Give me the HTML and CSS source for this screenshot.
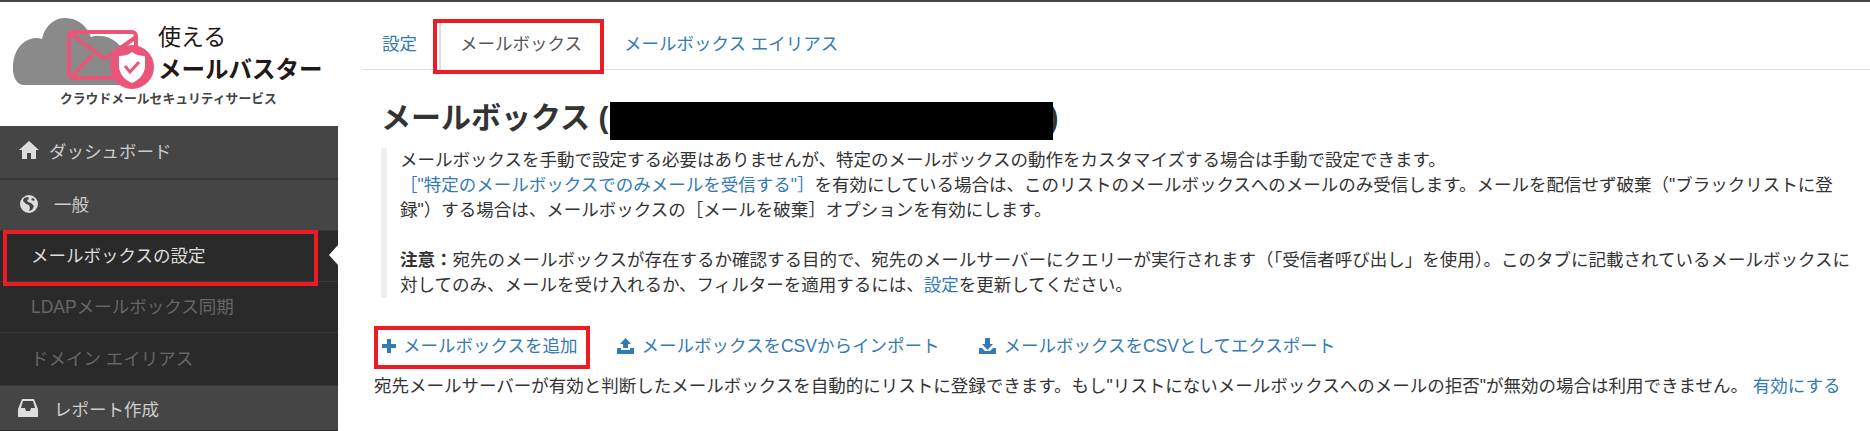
FILE: index.html
```html
<!DOCTYPE html>
<html lang="ja">
  <head>
    <meta charset="UTF-8" />
    <title>メールボックス</title>
    <link rel="stylesheet" href="styles.css">
  </head>
  <body>
    <div class="page">
      <aside class="sidebar">
        <div class="logo">
          <div class="logo-top">
            <svg class="logo-mark" viewBox="0 0 145 72" width="145" height="72">
              <path d="M10 68 C-4 66 -3 36 10 26 C16 21 24 20 29 22 C32 8 42 1 52 1 C66 1 74 10 78 20 C86 17 100 20 106 28 C118 30 124 40 124 50 L120 68 Z" fill="#8a8a8a" />
              <rect x="56" y="15" width="67" height="46" rx="4" fill="none" stroke="#e9567a" stroke-width="4" />
              <path d="M57 16 L89 40 Q92 42 95 40 L123 20 M58 61 L79 38" fill="none" stroke="#e9567a" stroke-width="4" />
              <circle cx="119" cy="50" r="22" fill="#e9567a" />
              <path d="M119 35 C123 38 128 39 132 39 L132 49 C132 57 126 63 119 66 C112 63 106 57 106 49 L106 39 C110 39 115 38 119 35 Z" fill="#fff" />
              <path d="M112 49 L117 55 L126 45" fill="none" stroke="#e9567a" stroke-width="3" />
            </svg>
            <div class="logo-name">
              <span class="logo-small">使える</span>
              <span class="logo-big">メールバスター</span>
            </div>
          </div>
          <div class="logo-sub">クラウドメールセキュリティサービス</div>
        </div>
        <nav>
          <a class="nav-item nav-first">
            <svg class="nav-icon" viewBox="0 0 20 18"><path d="M10 0 L20 9 L17 9 L17 18 L12 18 L12 12 L8 12 L8 18 L3 18 L3 9 L0 9 Z" /></svg>
            ダッシュボード
          </a>
          <a class="nav-item nav-general">
            <svg class="nav-icon" viewBox="0 0 18 18"><path fill-rule="evenodd" d="M9 0 A9 9 0 1 1 9 18 A9 9 0 1 1 9 0 Z M8 2 L4 3 L3 6 L6 9 L9 10 L10 13 L9 16 L12 15 L14 11 L11 8 L8 7 L7 5 L9 4 Z M13 3 L11 4 L13 6 L15 5 Z" /></svg>
            一般
          </a>
          <a class="sub-item active callout">メールボックスの設定</a>
          <a class="sub-item off">LDAPメールボックス同期</a>
          <a class="sub-item off sub-last">ドメイン エイリアス</a>
          <a class="nav-item nav-report">
            <svg class="nav-icon" viewBox="0 0 20 18"><path fill-rule="evenodd" d="M4 0 L16 0 L20 10 L20 18 L0 18 L0 10 Z M5 2 L3 9 L7 9 L8 12 L12 12 L13 9 L17 9 L15 2 Z" /></svg>
            レポート作成
          </a>
        </nav>
      </aside>

      <main class="content">
        <ul class="tabs">
          <li class="tab-first"><a href="#">設定</a></li>
          <li class="tab-on callout"><a href="#">メールボックス</a></li>
          <li><a href="#">メールボックス エイリアス</a></li>
        </ul>

        <h1 class="title">メールボックス (<span class="redacted"></span>)</h1>

        <blockquote class="note">
          メールボックスを手動で設定する必要はありませんが、特定のメールボックスの動作をカスタマイズする場合は手動で設定できます。<br>
          <a href="#">［"特定のメールボックスでのみメールを受信する"］</a>を有効にしている場合は、このリストのメールボックスへのメールのみ受信します。メールを配信せず破棄（"ブラックリストに登録"）する場合は、メールボックスの［メールを破棄］オプションを有効にします。<br>
          <br>
          <strong>注意：</strong>宛先のメールボックスが存在するか確認する目的で、宛先のメールサーバーにクエリーが実行されます（「受信者呼び出し」を使用）。このタブに記載されているメールボックスに対してのみ、メールを受け入れるか、フィルターを適用するには、<a href="#">設定</a>を更新してください。
        </blockquote>

        <div class="actions">
          <a href="#" class="action action-add callout">
            <svg class="action-icon icon-plus" viewBox="0 0 14 14"><path d="M5 0 H9 V5 H14 V9 H9 V14 H5 V9 H0 V5 H5 Z" /></svg>
            メールボックスを追加
          </a>
          <a href="#" class="action">
            <svg class="action-icon" viewBox="0 0 17 16"><path d="M8.5 0 L14 6 L11 6 L11 10 L6 10 L6 6 L3 6 Z M0 10 L4 10 L4 12 L13 12 L13 10 L17 10 L17 16 L0 16 Z" /></svg>
            メールボックスをCSVからインポート
          </a>
          <a href="#" class="action">
            <svg class="action-icon" viewBox="0 0 17 16"><path d="M6 0 L11 0 L11 6 L14 6 L8.5 12 L3 6 L6 6 Z M0 10 L3 10 L6 13 L11 13 L14 10 L17 10 L17 16 L0 16 Z" /></svg>
            メールボックスをCSVとしてエクスポート
          </a>
        </div>

        <p class="auto-list">宛先メールサーバーが有効と判断したメールボックスを自動的にリストに登録できます。もし"リストにないメールボックスへのメールの拒否"が無効の場合は利用できません。 <a href="#">有効にする</a></p>
      </main>
    </div>
  </body>
</html>
```

FILE: styles.css
```css
html,
body {
  margin: 0;
  padding: 0;
  height: 431px;
  overflow: hidden;
  background: #fff;
  color: #333;
  font-family: "Liberation Sans", "Noto Sans CJK JP", sans-serif;
  font-size: 17.5px;
}

a {
  color: #337ab7;
  text-decoration: none;
}

.page {
  display: flex;
  height: 429px;
  border-top: 2px solid #444;
}

/* sidebar */
.sidebar {
  width: 338px;
  flex-shrink: 0;
  background: #2a2a2a;
}

.logo {
  height: 124px;
  box-sizing: border-box;
  padding: 15px 0 0 13px;
  background: #fff;
}

.logo-top {
  display: flex;
  align-items: flex-start;
}

.logo-mark {
  flex-shrink: 0;
}

.logo-name {
  display: flex;
  flex-direction: column;
  color: #231815;
  white-space: nowrap;
}

.logo-small {
  font-size: 23px;
  line-height: 32px;
  margin-top: 4px;
}

.logo-big {
  font-size: 23.5px;
  font-weight: 700;
  line-height: 34px;
}

.logo-sub {
  margin: 2px 0 0 47px;
  color: #444;
  font-size: 12.8px;
  font-weight: 700;
  line-height: 16px;
  white-space: nowrap;
}

.nav-item,
.sub-item {
  display: flex;
  align-items: center;
  box-sizing: border-box;
  font-size: 17.5px;
  white-space: nowrap;
}

.nav-item {
  background: #454545;
  color: #ccc;
  border-bottom: 2px solid #383838;
}

.nav-first {
  height: 54px;
  padding: 0 0 4px 19px;
  gap: 10px;
}

.nav-general {
  height: 51px;
  padding: 0 0 3px 19px;
  gap: 15px;
  border-bottom-width: 1px;
}

.nav-report {
  height: 45px;
  padding-left: 18px;
  gap: 16px;
  border-bottom: 0;
  border-top: 1px solid #383838;
}

.nav-icon {
  width: 20px;
  height: 18px;
  fill: #ddd;
  flex-shrink: 0;
}

.sub-item {
  height: 51px;
  padding: 0 0 4px 31px;
  border-bottom: 1px solid #3a3a3a;
  color: #666;
}

.sub-last {
  height: 52px;
  border-bottom: 0;
}

.sub-item.active {
  color: #ddd;
}

/* little white arrow pointing at the content */
.sub-item.active::before {
  content: "";
  position: absolute;
  right: 0;
  top: 14px;
  border-style: solid;
  border-width: 10px 9px 10px 0;
  border-color: transparent #fff transparent transparent;
}

/* red marks added on the screenshot */
.callout {
  position: relative;
}

.callout::after {
  content: "";
  position: absolute;
  border: 4px solid #ed1c24;
  box-sizing: border-box;
  pointer-events: none;
}

.sub-item.callout::after {
  left: 3px;
  top: -1px;
  width: 315px;
  height: 56px;
}

.tab-on.callout::after {
  left: -8px;
  top: -1px;
  width: 171px;
  height: 55px;
}

.action-add.callout::after {
  left: -8px;
  top: -8px;
  width: 216px;
  height: 43px;
}

/* content */
.content {
  flex: 1;
  min-width: 0;
  padding: 18px 19px 0 24px;
}

.tabs {
  display: flex;
  height: 49px;
  margin: 0 -19px 0 0;
  padding: 0;
  list-style: none;
  border-bottom: 1px solid #ddd;
}

.tabs li {
  height: 50px;
}

.tabs a {
  display: block;
  padding: 0 21px;
  line-height: 48px;
  white-space: nowrap;
}

.tabs .tab-first a {
  padding: 0 22px 0 20px;
}

.tab-on {
  box-sizing: border-box;
  background: #fff;
  border-left: 2px solid #ddd;
}

.tabs .tab-on a {
  color: #555;
  padding: 0 21px 0 19px;
}

.title {
  display: flex;
  align-items: flex-start;
  height: 38px;
  margin: 32px 0 0 19px;
  font-size: 30px;
  font-weight: 700;
  line-height: 32px;
  white-space: pre;
}

.redacted {
  position: relative;
  display: block;
  width: 443px;
  height: 38px;
  margin: 0 -5px 0 2px;
  background: #000;
}

.note {
  margin: 8px 0 0 19px;
  padding: 0 0 0 13px;
  border-left: 6px solid #eee;
  line-height: 25px;
}

.actions {
  display: flex;
  margin: 36px 0 0 20px;
  line-height: 24px;
}

.action {
  display: flex;
  align-items: center;
  gap: 7px;
  margin-right: 40px;
  white-space: nowrap;
}

.action-icon {
  width: 17px;
  height: 16px;
  fill: #337ab7;
}

.icon-plus {
  width: 14px;
  height: 14px;
}

.auto-list {
  margin: 16px 0 0 12px;
  line-height: 24px;
  white-space: nowrap;
}
```
